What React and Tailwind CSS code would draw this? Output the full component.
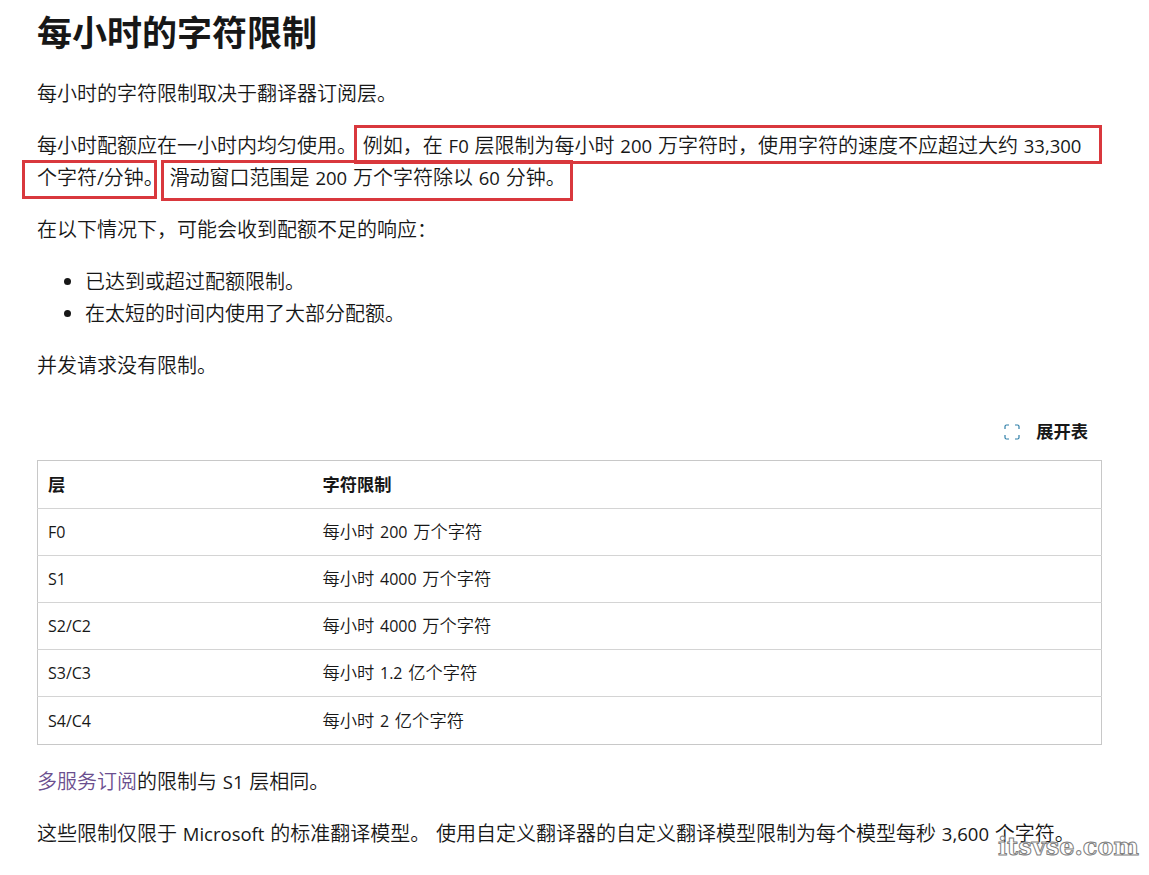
function Mixed({ text, small }) {
  const parts = text.split(/([\u0020-\u007e]+)/).filter(Boolean);
  return parts.map((p, i) =>
    /^[\u0020-\u007e]+$/.test(p) ? (
      <span key={i} className={small ? "text-[16px] leading-none font-normal [word-spacing:1.5px]" : "text-[18.5px] leading-none font-normal [word-spacing:1px]"}>{p}</span>
    ) : (
      <span key={i}>{p}</span>
    )
  );
}

const rows = [
  ["F0", "每小时 200 万个字符"],
  ["S1", "每小时 4000 万个字符"],
  ["S2/C2", "每小时 4000 万个字符"],
  ["S3/C3", "每小时 1.2 亿个字符"],
  ["S4/C4", "每小时 2 亿个字符"],
];

function Box({ className }) {
  return <div className={"absolute border-[3px] border-[#d9383d] " + className} />;
}

export default function App() {
  return (
    <div className="relative h-[875px] w-[1149px] overflow-hidden bg-white text-[20px] leading-[32px] font-[350] text-[#171717] font-['Open_Sans','Noto_Sans_CJK_SC',sans-serif]">
      <div className="ml-[37px] w-[1065px] pt-[10px]">
        <h2 className="text-[35px] leading-[46px] font-bold">每小时的字符限制</h2>
        <p className="mt-[22px]">每小时的字符限制取决于翻译器订阅层。</p>
        <p className="mt-[20px]">
          <Mixed text="每小时配额应在一小时内均匀使用。 例如，在 F0 层限制为每小时 200 万字符时，使用字符的速度不应超过大约 33,300 个字符/分钟。 滑动窗口范围是 200 万个字符除以 60 分钟。" />
        </p>
        <p className="mt-[20px]">在以下情况下，可能会收到配额不足的响应：</p>
        <ul className="mt-[20px] ml-[48px] list-disc">
          <li>已达到或超过配额限制。</li>
          <li>在太短的时间内使用了大部分配额。</li>
        </ul>
        <p className="mt-[20px]">并发请求没有限制。</p>
        <div className="mt-[34px] flex h-[32px] items-center justify-end pr-[14px] text-[17.3px] font-bold">
          <svg width="16" height="16" viewBox="0 0 16 16" fill="none" stroke="#2f7fa8" strokeWidth="1.2" className="mr-[16px]">
            <path d="M1 5V2.500A1.500 1.500 0 0 1 2.500 1H5M11 1h2.500A1.500 1.500 0 0 1 15 2.500V5M15 11v2.500a1.500 1.500 0 0 1-1.500 1.500H11M5 15H2.500A1.500 1.500 0 0 1 1 13.500V11" />
          </svg>
          展开表
        </div>
        <table className="mt-[12px] w-full border-collapse border border-[#c8c8c8] text-[17.3px] leading-[24px]">
          <thead>
            <tr className="h-[48px] font-bold">
              <th className="w-[275px] px-[10px] text-left">层</th>
              <th className="px-[10px] text-left">字符限制</th>
            </tr>
          </thead>
          <tbody>
            {rows.map(([a, b], i) => (
              <tr key={a} className={(i === 4 ? "h-[48px]" : "h-[47px]") + " border-t border-[#d4d4d4]"}>
                <td className="px-[10px]"><Mixed text={a} small /></td>
                <td className="px-[10px]"><Mixed text={b} small /></td>
              </tr>
            ))}
          </tbody>
        </table>
        <p className="mt-[21px]">
          <span className="text-[#6b4f8f]">多服务订阅</span>
          <Mixed text="的限制与 S1 层相同。" />
        </p>
        <p className="mt-[20px] whitespace-nowrap">
          <Mixed text="这些限制仅限于 Microsoft 的标准翻译模型。 使用自定义翻译器的自定义翻译模型限制为每个模型每秒 3,600 个字符。" />
        </p>
      </div>
      <Box className="left-[354px] top-[125px] h-[39px] w-[748px]" />
      <Box className="left-[22px] top-[160px] h-[39px] w-[135px]" />
      <Box className="left-[161px] top-[160px] h-[41px] w-[412px]" />
      <div className="absolute left-[998px] top-[827px] text-[24px] leading-[40px] font-bold font-['DejaVu_Serif',serif] text-white [-webkit-text-stroke:1px_#808080]">
        itsvse.com
      </div>
    </div>
  );
}
